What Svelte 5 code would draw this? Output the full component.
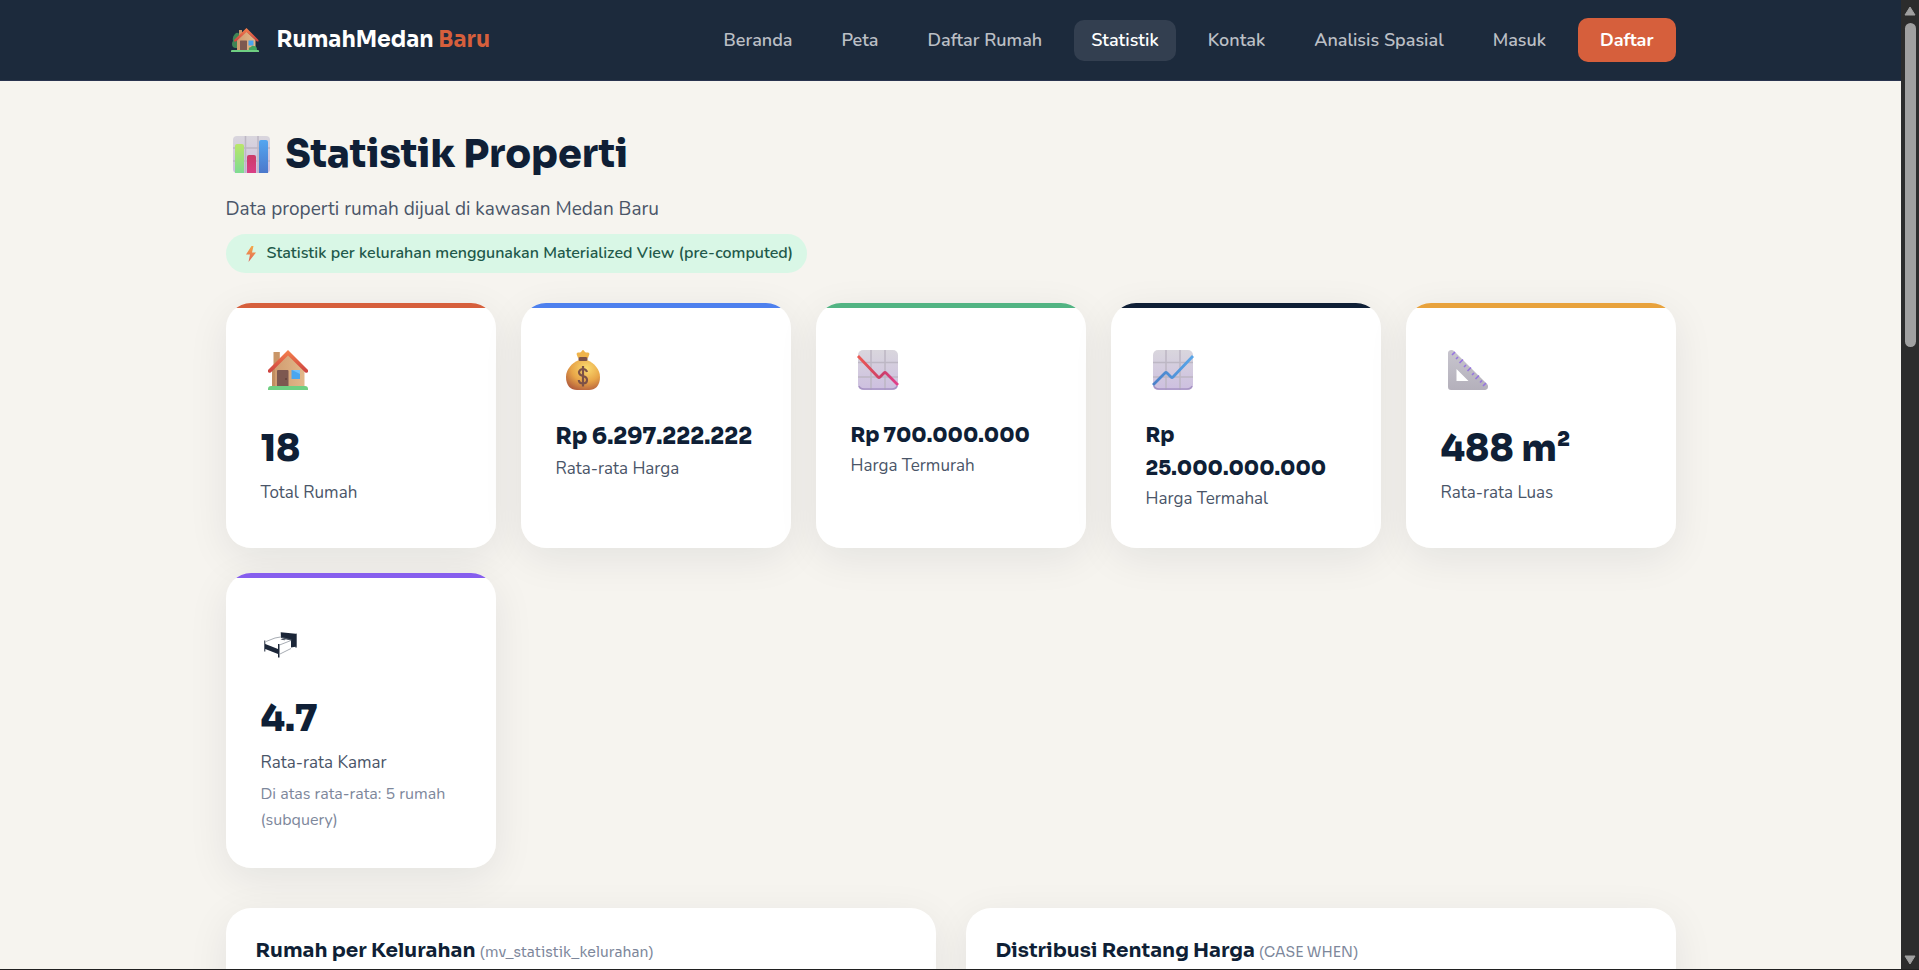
<script>
  const links = ['Beranda', 'Peta', 'Daftar Rumah', 'Statistik', 'Kontak', 'Analisis Spasial', 'Masuk'];
  const active = 'Statistik';

  const stats = [
    { icon: 'house', tone: 'orange', size: 'large', value: '18', label: 'Total Rumah' },
    { icon: 'bag', tone: 'blue', size: 'medium', value: 'Rp 6.297.222.222', label: 'Rata-rata Harga' },
    { icon: 'down', tone: 'green', size: 'small', value: 'Rp 700.000.000', label: 'Harga Termurah' },
    { icon: 'up', tone: 'navy', size: 'small', value: 'Rp 25.000.000.000', label: 'Harga Termahal' },
    { icon: 'ruler', tone: 'amber', size: 'large', value: '488 m²', label: 'Rata-rata Luas' },
    {
      icon: 'bed', tone: 'violet', size: 'large', value: '4.7', label: 'Rata-rata Kamar',
      note: 'Di atas rata-rata: 5 rumah (subquery)'
    }
  ];

  const panels = [
    { title: 'Rumah per Kelurahan', source: '(mv_statistik_kelurahan)' },
    { title: 'Distribusi Rentang Harga', source: '(CASE WHEN)' }
  ];
</script>

{#snippet houseShape()}
  <rect x="12.500" y="9" width="6.300" height="16" fill="#c99668" />
  <path d="M11 25 27 10l16.500 15v19H11z" fill="url(#wall)" />
  <path d="M11 25v19h3V23z" fill="#b98559" opacity=".6" />
  <path d="M27 7 7 27v2q1 1.500 3 .3L27 12.500l17 16.800q2 1.200 3-.3v-2z" fill="url(#roof)" />
  <rect x="16" y="27" width="11.500" height="17" rx="1" fill="#7d5850" />
  <circle cx="25" cy="36" r=".8" fill="#4e332d" />
  <rect x="30.500" y="27" width="8.500" height="9" rx=".6" fill="#4aa6f0" />
  <path d="M31 27h8v4z" fill="#75c0f8" />
  <path d="M7 46q0-3 3-3h34q3 0 3 3v1H7z" fill="#6fcf82" />
{/snippet}

{#snippet gridPaper()}
  <rect x="7" y="7" width="40" height="40" rx="5" fill="url(#paper)" />
  <path d="M20 7v40M34 7v40M7 19.500h40M7 34h40" stroke="#bdb7c4" stroke-width="1.500" />
  <path d="M8 43q1 3 5 3h28q4 0 5-3" fill="none" stroke="#a794c4" stroke-width="1.500" />
{/snippet}

<svg class="defs" width="0" height="0" aria-hidden="true">
  <defs>
    <linearGradient id="wall" x1="0" x2="1"><stop stop-color="#cf9a6e" /><stop offset="1" stop-color="#e2b88a" /></linearGradient>
    <linearGradient id="roof" x1="0" y1="0" x2="0" y2="1"><stop stop-color="#f5824c" /><stop offset="1" stop-color="#cc4040" /></linearGradient>
    <linearGradient id="paper" x1="0" y1="0" x2="0" y2="1"><stop stop-color="#d9d6dd" /><stop offset="1" stop-color="#cdbfe0" /></linearGradient>
    <radialGradient id="gold" cx=".6" cy=".28" r=".8"><stop stop-color="#fbdc70" /><stop offset=".55" stop-color="#e8a548" /><stop offset="1" stop-color="#b05a3c" /></radialGradient>
    <linearGradient id="red" x1="0" x2="1"><stop stop-color="#ee5a52" /><stop offset=".6" stop-color="#cb3d68" /><stop offset="1" stop-color="#e33f8c" /></linearGradient>
    <linearGradient id="sky" x1="0" x2="1"><stop stop-color="#4a80c8" /><stop offset="1" stop-color="#57a6ea" /></linearGradient>
    <linearGradient id="barGreen" x1="0" y1="0" x2="0" y2="1"><stop stop-color="#b9e66a" /><stop offset="1" stop-color="#7fdb92" /></linearGradient>
    <linearGradient id="barRed" x1="0" y1="0" x2="0" y2="1"><stop stop-color="#cb3b68" /><stop offset="1" stop-color="#d93f86" /></linearGradient>
    <linearGradient id="barBlue" x1="0" y1="0" x2="0" y2="1"><stop stop-color="#54a6f0" /><stop offset="1" stop-color="#4b78cb" /></linearGradient>
    <linearGradient id="steel" x1="0" y1="0" x2="0" y2="1"><stop stop-color="#c8c5ce" /><stop offset="1" stop-color="#b4b0bb" /></linearGradient>
    <linearGradient id="flash" x1="0" y1="0" x2="0" y2="1"><stop stop-color="#f5a947" /><stop offset="1" stop-color="#e0605a" /></linearGradient>
  </defs>
</svg>

<div class="window">
  <div class="page">
    <header>
      <div class="container bar">
        <a class="brand" href="#beranda">
          <svg class="logo" viewBox="0 0 28 24" aria-hidden="true">
            <path d="M5 5q3-1 4 3v12H5Q1 20 1 16q0-2 1-3-1-5 3-8z" fill="#3f8455" />
            <path d="M8 2h3v6H8z" fill="#c99668" />
            <path d="M6 12 15 3l9.500 9v10.500H6z" fill="url(#wall)" />
            <path d="M15.500 0 3 12v1.500h2L15.500 4 26 13.500h1.500V12z" fill="url(#roof)" />
            <rect x="9" y="12.500" width="7" height="9.500" rx=".5" fill="#7d5850" />
            <rect x="17.500" y="12.500" width="5" height="5" fill="#4aa6f0" />
            <path d="M18 22q-1-3 2-3 1-2 3-1 3 0 3 4z" fill="#42a45e" />
            <path d="M0 24v-1q0-1 1-1h26q1 0 1 1v1z" fill="#6fcf82" />
          </svg>
          <span>RumahMedan <em>Baru</em></span>
        </a>
        <nav aria-label="Navigasi utama">
          {#each links as link}
            <a href="#{link}" class:active={link === active} aria-current={link === active ? 'page' : undefined}>{link}</a>
          {/each}
          <a class="register" href="#daftar">Daftar</a>
        </nav>
      </div>
    </header>

    <main class="container">
      <h1>
        <svg class="chart" viewBox="0 0 37 37" aria-hidden="true">
          <rect width="37" height="37" rx="4" fill="url(#paper)" />
          <path d="M12.500 0v37M25 0v37M0 12h37M0 25h37" stroke="#bdb7c4" stroke-width="1.500" />
          <path d="M2 37V10q0-2 2-2h5q2 0 2 2v27z" fill="url(#barGreen)" />
          <path d="M14 37V21q0-2 2-2h5q2 0 2 2v16z" fill="url(#barRed)" />
          <path d="M26 37V6q0-2 2-2h5q2 0 2 2v31z" fill="url(#barBlue)" />
        </svg>
        Statistik Properti
      </h1>
      <p class="lead">Data properti rumah dijual di kawasan Medan Baru</p>
      <p class="badge">
        <svg class="bolt" viewBox="0 0 10 16" aria-hidden="true"><path d="M5.500 0 0 8.500h4L2.500 16 10 6.500H6L7.500 0z" fill="url(#flash)" /></svg>
        Statistik per kelurahan menggunakan Materialized View (pre-computed)
      </p>

      <section class="stats" aria-label="Ringkasan">
        {#each stats as stat}
          <article class="card {stat.tone}">
            <svg class="icon" viewBox="0 0 54 54" aria-hidden="true">
              {#if stat.icon === 'house'}
                {@render houseShape()}
              {:else if stat.icon === 'bag'}
                <path d="M22 15c-1-3-2-4-1-5s3 0 4-1 1-2 2-2 1 1 2 2 3 0 4 1 0 2-1 5z" fill="#f0b44c" />
                <path d="M23 17h8c7 3 13 9 13 17 0 9-5 13-11 13H21c-6 0-11-4-11-13 0-8 6-14 13-17z" fill="url(#gold)" />
                <rect x="22.500" y="14" width="9" height="4" rx="1.500" fill="#7c5147" />
                <path d="M31 29q-.8-3-4-3t-4 3q0 3 4 4t4 4q0 3.500-4 3.500t-4.200-3.500M27 23v20.500" fill="none" stroke="#7c5147" stroke-width="2.200" />
              {:else if stat.icon === 'down'}
                {@render gridPaper()}
                <path d="m7 13 20 21q1 1 2 0l4-4q1-1 2 0l12 12" fill="none" stroke="url(#red)" stroke-width="2.800" />
              {:else if stat.icon === 'up'}
                {@render gridPaper()}
                <path d="m7 42 12-12q1-1 2 0l4 4q1 1 2 0l20-21" fill="none" stroke="url(#sky)" stroke-width="2.800" />
              {:else if stat.icon === 'ruler'}
                <path fill-rule="evenodd" d="M7 10c0-3 4-4 6-2l33 33c2 2 1 6-2 6H10q-3 0-3-3zm8.500 16v12h12z" fill="url(#steel)" />
                <path d="m11 12 3-3M15 16l2-2M18.500 20l3.500-3.500M23 24l2-2M26.500 28l3.500-3.500M31 32l2-2M34.500 36l3.500-3.500M39 39.500l2-2M42 43l3-3" stroke="#9674e0" stroke-width="1.600" />
              {:else}
                <path d="m19.700 19.300 15 1.500 1-.4v14.200l-1.200.2v-1l-4.500.8v-7l-10-2.600zM3.300 27.500h1v3.500L17 36v-5h1.500v13.500H17V41L4.300 36v2.500h-1z" fill="#1b2638" />
                <path d="m19 41 11-5.500M5 28.500l9-3.500M14 25l5.500-1 11 3M18.500 32 30 27.500" fill="none" stroke="#6b7380" stroke-width=".6" />
                <path d="m21 26 4 .4-1.500.8-4-.6z" fill="#303a49" />
              {/if}
            </svg>
            <strong class={stat.size}>{stat.value}</strong>
            <span class="label">{stat.label}</span>
            {#if stat.note}<small>{stat.note}</small>{/if}
          </article>
        {/each}
      </section>

      <section class="panels" aria-label="Grafik">
        {#each panels as panel}
          <article class="panel">
            <h2>{panel.title} <span>{panel.source}</span></h2>
          </article>
        {/each}
      </section>
    </main>
  </div>

  <div class="scroll" aria-hidden="true">
    <svg viewBox="0 0 12 10"><path d="M6 1 11 9H1z" /></svg>
    <div class="track"><div class="thumb"></div></div>
    <svg viewBox="0 0 12 10"><path d="M6 9 1 1h10z" /></svg>
  </div>
</div>

<style>
  :global(body) {
    background: #f6f4ef;
  }
  .window {
    box-sizing: border-box;
    display: grid;
    grid-template-columns: minmax(0, 1fr) 18px;
    height: 100vh;
    overflow: hidden;
    border-bottom: 1px solid #202020;
    background: #f6f4ef;
    color: #0f1f36;
    font-family: Nunito, 'Open Sans', sans-serif;
  }
  .defs {
    position: absolute;
  }
  .page {
    overflow: hidden;
  }
  .container {
    box-sizing: border-box;
    max-width: 1498px;
    margin: 0 auto;
    padding: 0 24px;
  }
  header {
    background: #1c2a3c;
    border-bottom: 1px solid #29334f;
  }
  .bar {
    display: flex;
    align-items: center;
    justify-content: space-between;
    height: 80px;
  }
  a {
    text-decoration: none;
  }
  .brand {
    display: flex;
    align-items: center;
    gap: 18px;
    padding-left: 5px;
    color: #fff;
    font: 700 22px/36px Sora, Inter, sans-serif;
  }
  .brand em {
    color: #d65f3c;
    font-style: normal;
  }
  .logo {
    width: 28px;
    height: 24px;
  }
  nav {
    display: flex;
    align-items: center;
    gap: 15px;
  }
  nav a {
    padding: 8px 17px;
    border-radius: 10px;
    color: #bbbfc5;
    font-size: 18px;
    font-weight: 600;
    line-height: 25px;
  }
  nav .active {
    background: #333f50;
    color: #fff;
  }
  nav .register {
    padding: 10px 22px 9px;
    background: #d65f3c;
    color: #fff;
    font-weight: 700;
  }
  h1 {
    display: flex;
    align-items: center;
    gap: 16px;
    margin: 41px 0 0;
    padding-left: 7px;
    font: 800 38px/64px Sora, Inter, sans-serif;
  }
  .chart {
    width: 37px;
    height: 37px;
  }
  .lead {
    margin: 8px 0 0;
    color: #4a5568;
    font-size: 19px;
    line-height: 30px;
  }
  .badge {
    display: flex;
    align-items: center;
    gap: 11px;
    width: fit-content;
    margin: 10px 0 30px;
    padding: 0 14px 0 20px;
    border-radius: 20px;
    background: #d9f7e6;
    color: #22594a;
    font-size: 16px;
    font-weight: 600;
    line-height: 39px;
  }
  .bolt {
    width: 10px;
    height: 16px;
  }
  .stats {
    display: grid;
    grid-template-columns: repeat(auto-fill, minmax(250px, 1fr));
    gap: 25px;
  }
  .card,
  .panel {
    border-radius: 25px;
    background: #fff;
    box-shadow: 0 10px 40px rgba(15, 31, 54, 0.08);
  }
  .card {
    display: flex;
    flex-direction: column;
    padding: 35px;
    background: linear-gradient(var(--tone) 5px, #fff 5px);
  }
  .orange { --tone: #d65f3c; }
  .blue { --tone: #4d80ee; }
  .green { --tone: #52b483; }
  .navy { --tone: #0f1f36; }
  .amber { --tone: #e8a23c; }
  .violet { --tone: #865eee; }
  .icon {
    width: 54px;
    height: 54px;
    margin: 5px 0 22px;
  }
  strong {
    font-family: Sora, Inter, sans-serif;
    font-weight: 800;
  }
  .large {
    font-size: 36px;
    line-height: 60px;
  }
  .medium {
    font-size: 22px;
    line-height: 36px;
  }
  .small {
    font-size: 20px;
    line-height: 33px;
  }
  .label {
    color: #4a5568;
    font-size: 17px;
    line-height: 28px;
  }
  small {
    margin-top: 4px;
    color: #7d879b;
    font-size: 16px;
    line-height: 26px;
  }
  .panels {
    display: grid;
    grid-template-columns: repeat(2, minmax(0, 1fr));
    gap: 30px;
    margin-top: 40px;
  }
  .panel {
    min-height: 400px;
  }
  h2 {
    margin: 0;
    padding: 27px 30px;
    font: 700 20px/32px Sora, Inter, sans-serif;
  }
  h2 span {
    color: #7d879b;
    font-size: 14px;
    font-weight: 400;
  }
  .scroll {
    display: flex;
    flex-direction: column;
    align-items: center;
    gap: 7px;
    padding: 6px 0 4px;
    background: #2c2c2c;
  }
  .scroll svg {
    width: 12px;
    height: 10px;
    fill: #a0a0a0;
    stroke: #a0a0a0;
    stroke-linejoin: round;
  }
  .track {
    flex: 1;
    width: 11px;
  }
  .thumb {
    height: 35%;
    border-radius: 6px;
    background: #a0a0a0;
  }
</style>
